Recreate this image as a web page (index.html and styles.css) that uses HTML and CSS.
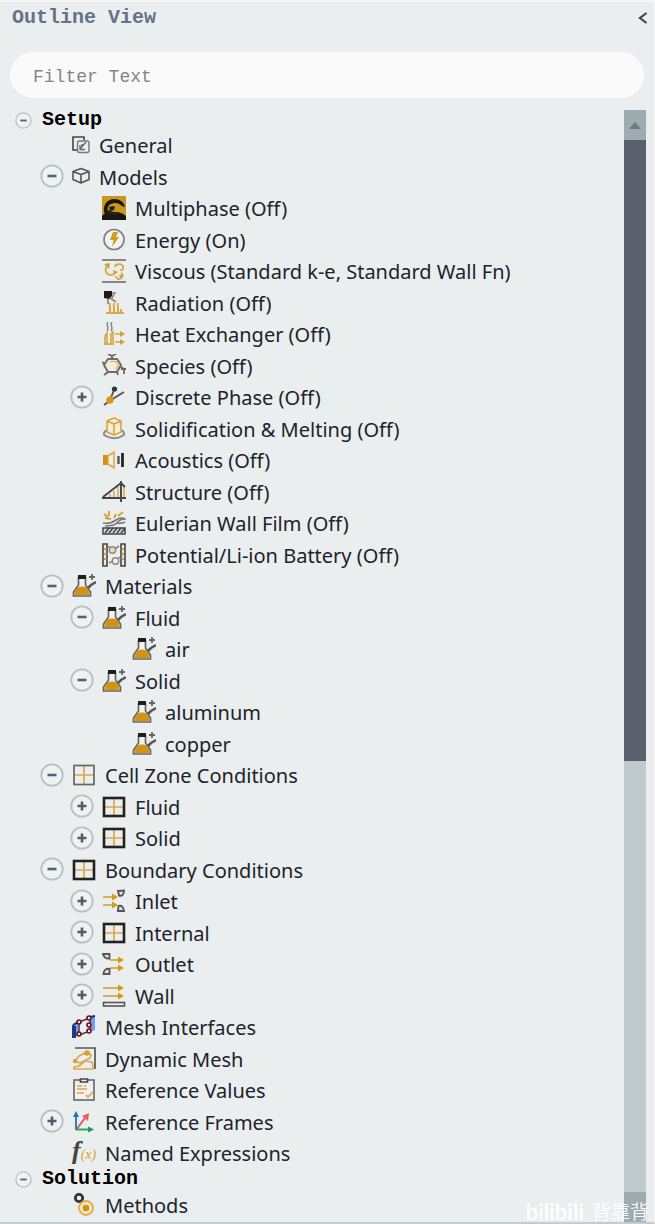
FILE: index.html
```html
<!DOCTYPE html>
<html lang="en">
<head>
    <meta charset="UTF-8">
    <meta name="viewport" content="width=device-width, initial-scale=1.0">
    <title>Outline View</title>
    <link rel="stylesheet" href="styles.css">
</head>
<body>
    <!-- Icon sprite -->
    <svg class="sprite" aria-hidden="true">
        <symbol id="minus" viewBox="0 0 24 24">
            <circle cx="12" cy="12" r="10.7" fill="#eff2f3" stroke="#b9bfc1" stroke-width="1.8"/>
            <path d="M7.500 12h9" stroke="#5b6070" stroke-width="2.600"/>
        </symbol>
        <symbol id="plus" viewBox="0 0 24 24">
            <circle cx="12" cy="12" r="10.7" fill="#eff2f3" stroke="#b9bfc1" stroke-width="1.8"/>
            <path d="M7.500 12h9M12 7.500v9" stroke="#565b66" stroke-width="2.600"/>
        </symbol>
        <symbol id="general" viewBox="0 0 18 18">
            <path d="M12 4V1H1v13h4" fill="none" stroke="#444" stroke-width="1.600"/>
            <rect x="5.500" y="5" width="11.500" height="11.500" rx="2" fill="none" stroke="#777" stroke-width="1.400"/>
            <path d="M14 6L8 13M8 9v4.500h5M9 9h3" fill="none" stroke="#666" stroke-width="1.300"/>
        </symbol>
        <symbol id="models" viewBox="0 0 18 18">
            <path d="M9 1.500l8 3v8L9 16l-8-3.500v-8zM1 4.500l8 3 8-3M9 7.500V16" fill="none" stroke="#555" stroke-width="1.600" stroke-linejoin="round"/>
        </symbol>
        <symbol id="multiphase" viewBox="0 0 24 24">
            <path d="M0 0h24v24H0z" fill="#cc951b"/>
            <path d="M0 24v-4c3-4 6-5 10-4 5 0 10 0 14 4v4z" fill="#171717"/>
            <path d="M2 16C1 8 6 3 12 3c6 0 10 3 11 8l-3-1c-3-3-7-4-11-2-3 1-4 4-3 8l-2 3z" fill="#171717"/>
            <path d="M7 11l4-1 2 1-1 3-4 1zM6 14l6 2 6 1-4 2-8-1z" fill="#2b210d"/>
        </symbol>
        <symbol id="energy" viewBox="0 0 24 24">
            <circle cx="12" cy="11.500" r="10" fill="#f1f2f2" stroke="#808080" stroke-width="1.700"/>
            <path d="M11 4h5l-2 5h3l-7 10 1.500-7H8z" fill="#d49a1e"/>
        </symbol>
        <symbol id="viscous" viewBox="0 0 24 24">
            <path d="M0 1h24M0 23h24" stroke="#666" stroke-width="1.600"/>
            <path d="M5 7c-3 4-1 9 4 9 3 0 4-2 4-4M13 8c0-3 6-4 8-1 1 3-1 5-3 4M14 17c0 3 3 4 5 2 2-1 2-4 0-5" fill="none" stroke="#dda83c" stroke-width="1.800"/>
            <path d="M2 5l6-1-1 6zM11 11l5 2-4 3zM17 16l5 0-3 4z" fill="#d9a02d"/>
        </symbol>
        <symbol id="radiation" viewBox="0 0 24 24">
            <path d="M2 0h8v5l-3 3-5-1z" fill="#1b1b1b"/>
            <path d="M10 2h4M8 7l6 4M6 8v5M12 3l-2 4" stroke="#858585" stroke-width="1.700"/>
            <path d="M4 22h18M8 22v-7c-1-1 0-2 0-3M12 22v-7c-1-1 0-2 0-3M16 22v-7c-1-1 0-2 0-3M19 21v-3" fill="none" stroke="#dba94a" stroke-width="2"/>
        </symbol>
        <symbol id="heat" viewBox="0 0 24 24">
            <path d="M6 0c-3 3 2 5-1 9M10 0c-3 3 2 5-1 9" fill="none" stroke="#8a8a8a" stroke-width="1.500"/>
            <path d="M3 23V14l2-3v12M9 23V12l2-2v13M2 22h10" fill="none" stroke="#d8a642" stroke-width="1.600"/>
            <path d="M13 12h6M13 20h6" stroke="#d8a642" stroke-width="1.700"/>
            <path d="M18 9l5 3-5 3zM18 17l5 3-5 3z" fill="#d9a02d"/>
        </symbol>
        <symbol id="species" viewBox="0 0 24 24">
            <path d="M6 5h9l4 6-4 7H6l-4-7z" fill="#f4edda" stroke="#6d6d6d" stroke-width="2"/>
            <path d="M8 7.500h6l2.500 4-3 4" fill="none" stroke="#d6b266" stroke-width="1.200"/>
            <path d="M10 5V2M6 0l4 2 4-2M3 10L0 8M6 18l-4 3M15 18l1 3M19 13l3 2v5M19 15h5" fill="none" stroke="#666" stroke-width="1.800"/>
        </symbol>
        <symbol id="discrete" viewBox="0 0 24 24">
            <path d="M2 20l7-5 13-8M8 15l4-10" fill="none" stroke="#555" stroke-width="1.900"/>
            <circle cx="12.500" cy="4" r="2.600" fill="#333"/>
            <circle cx="8" cy="15" r="3.700" fill="#d79a17"/>
        </symbol>
        <symbol id="melting" viewBox="0 0 24 24">
            <path d="M5 13c-4 2-4 5-1 6 5 3 12 3 16 0 3-1 3-4-1-6" fill="none" stroke="#8b8b8b" stroke-width="2"/>
            <path d="M12 1l7 3v11l-7 3-7-3V4zM5 4l7 3 7-3M12 7v11" fill="#f5edda" stroke="#dca63b" stroke-width="1.600" stroke-linejoin="round"/>
        </symbol>
        <symbol id="acoustics" viewBox="0 0 24 24">
            <path d="M1 7h5v10H1z" fill="#cf9218"/>
            <path d="M6 8l6-4v16l-6-4z" fill="#f3eee0" stroke="#dba94a" stroke-width="1.600"/>
            <path d="M16.500 8v8" stroke="#555" stroke-width="2.400"/>
            <path d="M20.500 5v14" stroke="#252525" stroke-width="2.800"/>
        </symbol>
        <symbol id="structure" viewBox="0 0 24 24">
            <path d="M8 18v-4M12 18v-7M16 18V7M22 18V6" stroke="#d9b878" stroke-width="2"/>
            <path d="M0 18h24M1 17L19 3l4 4M19 1v21" fill="none" stroke="#444" stroke-width="1.900"/>
        </symbol>
        <symbol id="film" viewBox="0 0 24 24">
            <path d="M2 3l4 3M7 0v5M12 7l2-4M16 5l5-4M3 7l6 1" fill="none" stroke="#d9a02d" stroke-width="1.900"/>
            <path d="M1 12c6 1 9 0 13-3s8-2 9-1c-4 0-6 1-8 4 4 1 6 0 8-1M3 15c6 0 10-1 12-3" fill="none" stroke="#777" stroke-width="1.600"/>
            <path d="M1 17h22v6H1z" fill="#ddd" stroke="#444" stroke-width="1.500"/>
            <path d="M3 22l4-5M7 22l4-5M11 22l4-5M15 22l4-5M19 22l4-5" stroke="#444" stroke-width="1.600"/>
        </symbol>
        <symbol id="battery" viewBox="0 0 24 24">
            <path d="M1 1h4v22H1zM19 1h4v22h-4z" fill="#f2ead9" stroke="#444" stroke-width="1.600"/>
            <path d="M2 6h3M2 11h3M2 16h3M19 6h3M19 11h3M19 16h3" stroke="#b98b32" stroke-width="1.600"/>
            <circle cx="10.500" cy="7" r="3.200" fill="#f0d9a5" stroke="#888" stroke-width="1.400"/>
            <circle cx="13.500" cy="18" r="3.200" fill="#eee" stroke="#888" stroke-width="1.400"/>
            <path d="M6 3l2 2M13 6l4-3M7 20l4-2M16 16l2-2" stroke="#888" stroke-width="1.600"/>
        </symbol>
        <symbol id="flask" viewBox="0 0 24 24">
            <path d="M6.500 3v8L1.500 18v4h17v-4l-5-7V3" fill="#f1f2f2" stroke="#666" stroke-width="1.700"/>
            <path d="M5 14c3-2 7-2 10 0l2.500 4.500V21h-15v-2.500z" fill="#cf9415"/>
            <path d="M6 1h8v4H6z" fill="#1d1d1d"/>
            <path d="M16 14l3-3 5-3" fill="none" stroke="#555" stroke-width="2.500"/>
            <path d="M20 0v6M17 3h6" stroke="#666" stroke-width="1.800"/>
        </symbol>
        <symbol id="zone-light" viewBox="0 0 24 24">
            <path d="M12 3v18M2 12h20" stroke="#dba94a" stroke-width="1.700"/>
            <rect x="2" y="2.500" width="20" height="19" fill="none" stroke="#666" stroke-width="1.700"/>
        </symbol>
        <symbol id="zone" viewBox="0 0 24 24">
            <path d="M12 3v18M2 12h20" stroke="#dba94a" stroke-width="1.700"/>
            <rect x="2" y="3" width="20" height="18" fill="none" stroke="#222" stroke-width="2.600"/>
        </symbol>
        <symbol id="inlet" viewBox="0 0 24 24">
            <path d="M1 8h9M1 16h9" stroke="#dcae55" stroke-width="1.900"/>
            <path d="M10 4.500l6 3.500-6 3.500zM10 12.500l6 3.500-6 3.500z" fill="#d49a1e"/>
            <path d="M16 2l6-.5c0 4-2 6-5 5zM16 22l.5-5c3-1 5 1 5.500 5z" fill="#e4e4e4" stroke="#555" stroke-width="1.900"/>
        </symbol>
        <symbol id="outlet" viewBox="0 0 24 24">
            <path d="M8 8h9M8 16h9" stroke="#dcae55" stroke-width="1.900"/>
            <path d="M16 4.500l6 3.500-6 3.500zM16 12.500l6 3.500-6 3.500z" fill="#d49a1e"/>
            <path d="M1 2h6.500v4.500C4 7 2 5 1 2zM1.500 22c0-4 3-6 6-5v5z" fill="#e4e4e4" stroke="#555" stroke-width="1.900"/>
        </symbol>
        <symbol id="wall" viewBox="0 0 24 24">
            <path d="M1 4h18M1 12h18" stroke="#dcae55" stroke-width="1.900"/>
            <path d="M16 .5L22 4l-6 3.500zM16 8.500l6 3.500-6 3.500z" fill="#d49a1e"/>
            <rect x="1.500" y="18.500" width="21" height="3.500" fill="#eee" stroke="#555" stroke-width="1.600"/>
        </symbol>
        <symbol id="mesh" viewBox="0 0 24 24">
            <path d="M1 9l5-2v13l-5 3zM18 3l5-3v15l-5 2z" fill="#6ea0ef"/>
            <path d="M1 23V10M1 10l5-3M3 23V11M18 2l5-1" stroke="#142a78" stroke-width="1.800"/>
            <path d="M7 7l11-4v13L7 20z" fill="#eceff1" stroke="#454545" stroke-width="1.600"/>
            <g fill="#f1dede" stroke="#6b1218" stroke-width="1.600">
                <circle cx="7" cy="7" r="2"/>
                <circle cx="17" cy="3" r="2"/>
                <circle cx="17" cy="10" r="2"/>
                <circle cx="17" cy="16" r="2"/>
                <circle cx="7" cy="19" r="2"/>
            </g>
        </symbol>
        <symbol id="dynamic" viewBox="0 0 24 24">
            <path d="M3 1h20v21" fill="none" stroke="#555" stroke-width="1.700"/>
            <path d="M3 14l4-5 8-4 4 3-1 3-10 5zM2 20v2h19v-2l-1-5-7-1-6 5z" fill="none" stroke="#dba94a" stroke-width="1.700" stroke-linejoin="round"/>
            <circle cx="3" cy="14" r="2.200" fill="#d9a02d"/>
            <circle cx="15" cy="6" r="2.800" fill="#d9a02d"/>
        </symbol>
        <symbol id="values" viewBox="0 0 24 24">
            <rect x="2" y="2" width="20" height="20" fill="#f0f0ee" stroke="#666" stroke-width="1.600"/>
            <path d="M8.500 1h7v3h-7z" fill="#eee" stroke="#444" stroke-width="1.600"/>
            <path d="M5 8h5M12 8h2M5 11h10M5 15h7M14 17l2 2 5-5" fill="none" stroke="#dba94a" stroke-width="1.700"/>
        </symbol>
        <symbol id="frames" viewBox="0 0 24 24">
            <path d="M4 20L13 8" stroke="#e0575a" stroke-width="2"/>
            <path d="M17 3l-1 8-6-5z" fill="#ef5a5d"/>
            <path d="M4 20V6" stroke="#3481b6" stroke-width="2"/>
            <path d="M1 7l3-6 3 6z" fill="#1f76b4"/>
            <path d="M4 19.500h14" stroke="#31a36c" stroke-width="2"/>
            <path d="M16 16.500l6 3-6 3z" fill="#1a9c5d"/>
        </symbol>
        <symbol id="methods" viewBox="0 0 24 24">
            <circle cx="7" cy="5" r="3.700" fill="none" stroke="#353535" stroke-width="2.800"/>
            <circle cx="14" cy="15" r="7" fill="#f5e8c9" stroke="#e0ad46" stroke-width="1.800"/>
            <circle cx="14" cy="15" r="3.300" fill="#cf9415"/>
        </symbol>
    </svg>

    <main class="panel">
        <header class="panel-header">
            <h1>Outline View</h1>
            <button class="collapse" type="button" aria-label="Collapse">
                <svg viewBox="0 0 10 12"><path d="M8.500 1L2 6l6.500 5" fill="none" stroke="#444" stroke-width="2.200"/></svg>
            </button>
        </header>

        <input class="filter" type="text" placeholder="Filter Text" aria-label="Filter Text">

        <div class="content">
            <nav class="tree">
                <h2 class="section"><button class="toggle small" type="button" aria-label="Setup"><svg><use href="#minus"/></svg></button>Setup</h2>
                <ul>
                    <li class="level-1"><svg class="icon small"><use href="#general"/></svg>General</li>
                    <li class="level-1"><button class="toggle" type="button" aria-label="Models"><svg><use href="#minus"/></svg></button><svg class="icon small"><use href="#models"/></svg>Models</li>
                    <li class="level-2"><svg class="icon"><use href="#multiphase"/></svg>Multiphase (Off)</li>
                    <li class="level-2"><svg class="icon"><use href="#energy"/></svg>Energy (On)</li>
                    <li class="level-2"><svg class="icon"><use href="#viscous"/></svg>Viscous (Standard k-e, Standard Wall Fn)</li>
                    <li class="level-2"><svg class="icon"><use href="#radiation"/></svg>Radiation (Off)</li>
                    <li class="level-2"><svg class="icon"><use href="#heat"/></svg>Heat Exchanger (Off)</li>
                    <li class="level-2"><svg class="icon"><use href="#species"/></svg>Species (Off)</li>
                    <li class="level-2"><button class="toggle" type="button" aria-label="Discrete Phase"><svg><use href="#plus"/></svg></button><svg class="icon"><use href="#discrete"/></svg>Discrete Phase (Off)</li>
                    <li class="level-2"><svg class="icon"><use href="#melting"/></svg>Solidification &amp; Melting (Off)</li>
                    <li class="level-2"><svg class="icon"><use href="#acoustics"/></svg>Acoustics (Off)</li>
                    <li class="level-2"><svg class="icon"><use href="#structure"/></svg>Structure (Off)</li>
                    <li class="level-2"><svg class="icon"><use href="#film"/></svg>Eulerian Wall Film (Off)</li>
                    <li class="level-2"><svg class="icon"><use href="#battery"/></svg>Potential/Li-ion Battery (Off)</li>
                    <li class="level-1"><button class="toggle" type="button" aria-label="Materials"><svg><use href="#minus"/></svg></button><svg class="icon"><use href="#flask"/></svg>Materials</li>
                    <li class="level-2"><button class="toggle" type="button" aria-label="Fluid"><svg><use href="#minus"/></svg></button><svg class="icon"><use href="#flask"/></svg>Fluid</li>
                    <li class="level-3"><svg class="icon"><use href="#flask"/></svg>air</li>
                    <li class="level-2"><button class="toggle" type="button" aria-label="Solid"><svg><use href="#minus"/></svg></button><svg class="icon"><use href="#flask"/></svg>Solid</li>
                    <li class="level-3"><svg class="icon"><use href="#flask"/></svg>aluminum</li>
                    <li class="level-3"><svg class="icon"><use href="#flask"/></svg>copper</li>
                    <li class="level-1"><button class="toggle" type="button" aria-label="Cell Zone Conditions"><svg><use href="#minus"/></svg></button><svg class="icon"><use href="#zone-light"/></svg>Cell Zone Conditions</li>
                    <li class="level-2"><button class="toggle" type="button" aria-label="Fluid"><svg><use href="#plus"/></svg></button><svg class="icon"><use href="#zone"/></svg>Fluid</li>
                    <li class="level-2"><button class="toggle" type="button" aria-label="Solid"><svg><use href="#plus"/></svg></button><svg class="icon"><use href="#zone"/></svg>Solid</li>
                    <li class="level-1"><button class="toggle" type="button" aria-label="Boundary Conditions"><svg><use href="#minus"/></svg></button><svg class="icon"><use href="#zone"/></svg>Boundary Conditions</li>
                    <li class="level-2"><button class="toggle" type="button" aria-label="Inlet"><svg><use href="#plus"/></svg></button><svg class="icon"><use href="#inlet"/></svg>Inlet</li>
                    <li class="level-2"><button class="toggle" type="button" aria-label="Internal"><svg><use href="#plus"/></svg></button><svg class="icon"><use href="#zone"/></svg>Internal</li>
                    <li class="level-2"><button class="toggle" type="button" aria-label="Outlet"><svg><use href="#plus"/></svg></button><svg class="icon"><use href="#outlet"/></svg>Outlet</li>
                    <li class="level-2"><button class="toggle" type="button" aria-label="Wall"><svg><use href="#plus"/></svg></button><svg class="icon"><use href="#wall"/></svg>Wall</li>
                    <li class="level-1"><svg class="icon"><use href="#mesh"/></svg>Mesh Interfaces</li>
                    <li class="level-1"><svg class="icon"><use href="#dynamic"/></svg>Dynamic Mesh</li>
                    <li class="level-1"><svg class="icon"><use href="#values"/></svg>Reference Values</li>
                    <li class="level-1"><button class="toggle" type="button" aria-label="Reference Frames"><svg><use href="#plus"/></svg></button><svg class="icon"><use href="#frames"/></svg>Reference Frames</li>
                    <li class="level-1"><span class="icon fx"><i>f</i><small>(x)</small></span>Named Expressions</li>
                </ul>
                <h2 class="section"><button class="toggle small" type="button" aria-label="Solution"><svg><use href="#minus"/></svg></button>Solution</h2>
                <ul>
                    <li class="level-1"><svg class="icon"><use href="#methods"/></svg>Methods</li>
                </ul>
            </nav>

            <div class="scrollbar">
                <button class="scroll-up" type="button" aria-label="Scroll up"></button>
                <div class="track"><div class="thumb"></div></div>
                <button class="scroll-down" type="button" aria-label="Scroll down"></button>
            </div>
        </div>

        <div class="watermark"><b>bilibili</b><span>背靠背</span></div>
    </main>
</body>
</html>
```
FILE: styles.css
```css
* {
    box-sizing: border-box;
}

body {
    margin: 0;
    background-color: #ebeeef;
    color: #20232b;
    font-family: "Noto Sans", "Open Sans", sans-serif;
}

button {
    padding: 0;
    border: none;
    background: none;
    cursor: pointer;
}

.sprite {
    display: none;
}

.panel {
    position: relative;
    display: flex;
    flex-direction: column;
    min-height: 100vh;
    border-top: 2px solid #f5f7f9;
    border-right: 1px solid #f5f7f9;
    border-bottom: 2px solid #c5cbd0;
}

.panel-header {
    display: flex;
    justify-content: space-between;
    align-items: center;
    height: 32px;
    padding: 0 6px 0 12px;
}

h1,
h2 {
    margin: 0;
    font-family: "Liberation Mono", monospace;
    font-size: 20px;
    line-height: 20px;
}

h1 {
    color: #66718a;
}

.collapse svg {
    display: block;
    width: 10px;
    height: 12px;
}

.filter {
    height: 46px;
    margin: 18px 10px 12px;
    padding: 4px 23px 0;
    border: none;
    border-radius: 23px;
    background-color: #fafafa;
    font-family: "Liberation Mono", monospace;
    font-size: 18px;
}

.filter::placeholder {
    color: #858585;
}

.content {
    display: flex;
    flex: 1;
}

.tree {
    flex: 1;
}

.section {
    display: flex;
    align-items: center;
    gap: 10px;
    padding-left: 15px;
    color: #000;
}

ul {
    margin: 0;
    padding: 0;
    list-style: none;
}

li {
    display: flex;
    align-items: center;
    height: 31px;
    font-size: 20px;
    white-space: nowrap;
}

li:nth-child(even),
li:only-child {
    height: 32px;
}

.level-1 {
    padding-left: 72px;
}

.level-2 {
    padding-left: 102px;
}

.level-3 {
    padding-left: 132px;
}

.toggle,
.toggle svg {
    display: block;
    width: 24px;
    height: 24px;
}

/* The toggle hangs in the indent, left of the icon */
li .toggle {
    margin: 0 8px 2px -32px;
}

.toggle.small,
.toggle.small svg {
    width: 17px;
    height: 17px;
}

.icon {
    flex: none;
    width: 24px;
    height: 24px;
    margin: 0 9px 1px 0;
}

.icon.small {
    width: 18px;
    height: 18px;
    margin-bottom: 2px;
}

.fx {
    font-family: "Liberation Serif", serif;
    font-size: 26px;
    font-weight: bold;
    line-height: 20px;
    color: #444;
}

.fx small {
    font-size: 14px;
    font-style: italic;
    font-weight: normal;
    color: #d9a02d;
}

.scrollbar {
    display: flex;
    flex-direction: column;
    width: 22px;
    margin-right: 8px;
    background-color: #c1cacd;
}

.scroll-up,
.scroll-down {
    display: flex;
    justify-content: center;
    align-items: center;
    height: 30px;
    background-color: #9eabb1;
}

.scroll-up::before,
.scroll-down::before {
    content: "";
    border: 6px solid transparent;
    border-top: none;
    border-bottom: 7px solid #6d7b83;
}

.scroll-down::before {
    border-top: 7px solid #8e9ba2;
    border-bottom: none;
}

.track {
    flex: 1;
}

.thumb {
    height: 59%;
    background-color: #5b6070;
}

.watermark {
    position: absolute;
    right: 5px;
    bottom: -2px;
    display: flex;
    align-items: center;
    gap: 8px;
    height: 26px;
    overflow: hidden;
    color: #fff;
    font-family: "Noto Sans", "Noto Sans CJK SC", sans-serif;
    font-size: 19px;
    opacity: 0.9;
    pointer-events: none;
}

.watermark b {
    font-family: Lato, sans-serif;
    font-size: 22px;
}
```
